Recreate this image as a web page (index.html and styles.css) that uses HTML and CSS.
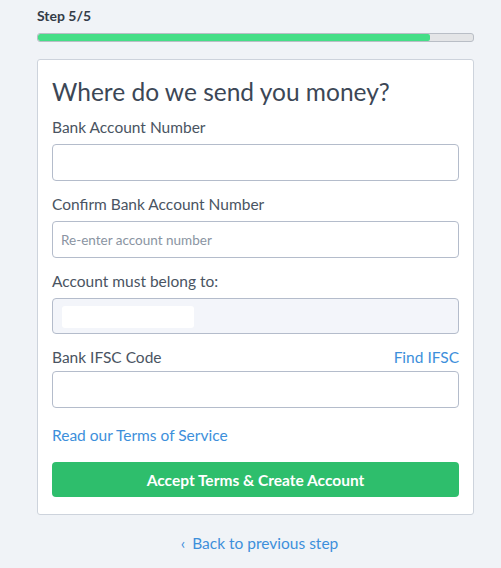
FILE: index.html
```html
<!DOCTYPE html>
<html>
<head>
<meta charset="utf-8">
<link rel="stylesheet" href="styles.css">
</head>
<body>
<div class="wrap">
  <div class="step">Step 5/5</div>
  <div class="progress"><div class="fill" style="width:90%"></div></div>
  <div class="card">
    <h1 class="title">Where do we send you money?</h1>
    <div class="field">
      <label class="label">Bank Account Number</label>
      <input class="input" type="text">
    </div>
    <div class="field">
      <label class="label">Confirm Bank Account Number</label>
      <input class="input" type="text" placeholder="Re-enter account number">
    </div>
    <div class="field">
      <label class="label">Account must belong to:</label>
      <div class="input disabled"><span class="blur"></span></div>
    </div>
    <div class="field">
      <div class="label-row">
        <label class="label">Bank IFSC Code</label>
        <a class="link">Find IFSC</a>
      </div>
      <input class="input" type="text">
    </div>
    <a class="link terms">Read our Terms of Service</a>
    <button class="btn">Accept Terms &amp; Create Account</button>
  </div>
  <div class="back"><a class="link"><span class="chev">‹</span> Back to previous step</a></div>
</div>
</body>
</html>
```
FILE: styles.css
```css
* { box-sizing: border-box; }
html, body { margin: 0; padding: 0; }
body {
  background: #f0f3f7;
  font-family: Lato, "Open Sans", sans-serif;
  color: #46505e;
  width: 501px;
  height: 568px;
  overflow: hidden;
}
.wrap {
  width: 437px;
  margin-left: 37px;
  padding-top: 6px;
}
.step {
  font-size: 14px;
  font-weight: 700;
  color: #333c48;
  line-height: 20px;
}
.progress {
  margin-top: 7px;
  height: 9px;
  border: 1px solid #b9bec6;
  background: #e4e5e7;
  border-radius: 3px;
  overflow: hidden;
}
.fill {
  height: 100%;
  background: #45de87;
  border-radius: 2px;
}
.card {
  margin-top: 17px;
  background: #fff;
  border: 1px solid #cdd3dc;
  border-radius: 3px;
  padding: 15px 14px 17px 14px;
  width: 437px;
}
.title {
  margin: 0;
  font-size: 24.5px;
  font-weight: 400;
  color: #3c4756;
  line-height: 33px;
}
.field { margin-top: 9px; display: flex; flex-direction: column; }
.field + .field { margin-top: 13px; }
.label {
  font-size: 15.5px;
  color: #4a5462;
  line-height: 20px;
  margin-bottom: 7px;
}
.label-row {
  display: flex;
  justify-content: space-between;
  align-items: baseline;
}
.label-row .label { margin-bottom: 4px; }
.input {
  display: block;
  width: 100%;
  height: 37px;
  border: 1px solid #b4bccb;
  border-radius: 4px;
  background: #fff;
  font-family: Lato, sans-serif;
  font-size: 13.5px;
  padding: 0 8px;
  color: #46505e;
  outline: none;
}
.input::placeholder { color: #8a94a2; }
.input.disabled {
  background: #f3f5fa;
  height: 36px;
  position: relative;
}
.blur {
  position: absolute;
  left: 9px;
  top: 7px;
  width: 132px;
  height: 22px;
  background: #fff;
  border-radius: 3px;
}
.link {
  color: #3d8fdb;
  font-size: 15.5px;
  line-height: 20px;
  text-decoration: none;
}
.terms {
  display: block;
  margin-top: 17px;
}
.btn {
  display: block;
  width: 100%;
  margin-top: 17px;
  height: 35px;
  border: none;
  border-radius: 4px;
  background: #2ebe6c;
  color: #fff;
  font-family: Lato, sans-serif;
  font-size: 15.5px;
  font-weight: 700;
}
.back {
  text-align: center;
  margin-top: 18px;
  padding-left: 8px;
}
.chev { font-size: 16px; margin-right: 3px; }
```
